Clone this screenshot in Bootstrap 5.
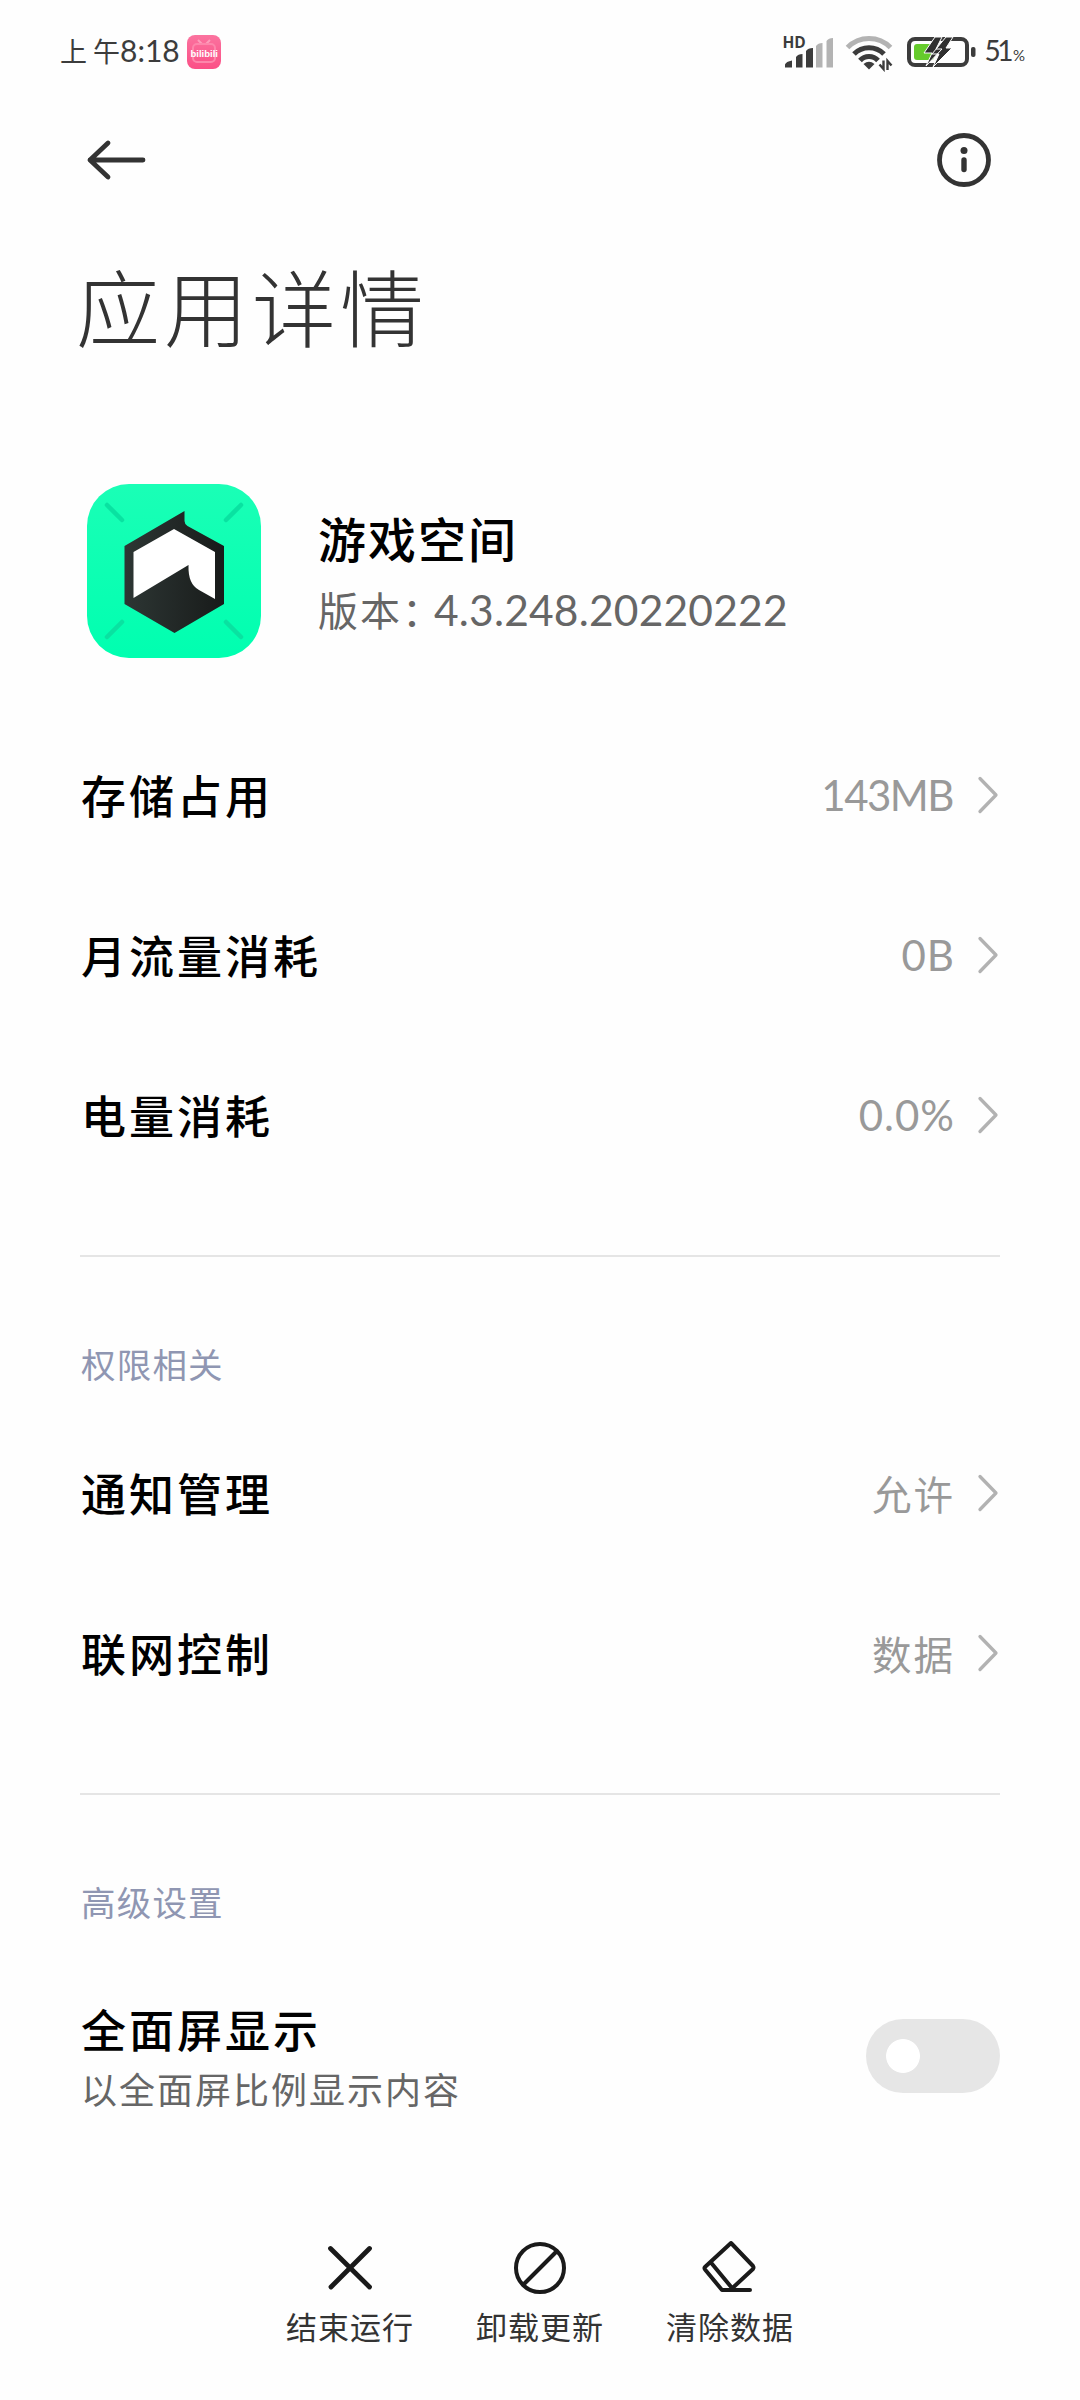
<!DOCTYPE html>
<html lang="zh-CN">
<head>
<meta charset="utf-8">
<meta name="viewport" content="width=device-width, initial-scale=1">
<title>应用详情</title>
<link href="https://cdn.jsdelivr.net/npm/bootstrap@5.3.0/dist/css/bootstrap.min.css" rel="stylesheet">
<style>
body{background:#fefefe;font-family:"Noto Sans CJK SC",sans-serif;color:#000;overflow:hidden}
.screen{width:1080px;height:2400px}
svg{display:block;flex:none}
.latin{font-family:Lato,"Noto Sans CJK SC",sans-serif}
.statusbar{height:104px;padding:0 55px 0 60px;color:#3c3c3c}
.clock{font-size:27px;line-height:36px;margin:-4px 7px 0 0;white-space:pre}
.clock-num{font-family:Lato,sans-serif;font-size:30px;letter-spacing:0}
.pct-num{font-family:Lato,sans-serif;font-size:28px;line-height:40px;letter-spacing:-3.500px}
.pct-sign{font-size:15px;letter-spacing:0;margin-left:3px}
.toolbar{height:112px;padding:0 88px 0 86px}
.page-title{height:186px;padding-left:76px;font-size:84px;line-height:178px;font-weight:300;letter-spacing:4px;color:#333;margin:0}
.app-head{height:313px;padding:82px 0 0 87px;gap:57px}
.app-text{padding-top:18px}
.app-name{font-size:48px;line-height:70px;font-weight:500;letter-spacing:2px}
.app-ver{font-size:40px;line-height:74px;letter-spacing:2px;color:#666;white-space:nowrap}
.app-ver .latin{font-size:42.500px;letter-spacing:.2px;margin-left:-10px}
.entry.list-group-item{height:160px;border:0;padding:0 81px;background:transparent;color:#000}
.entry-label{font-size:45px;line-height:60px;font-weight:500;letter-spacing:3px}
.entry-value{font-size:39.500px;line-height:60px;letter-spacing:2px;color:#999;margin-right:22px}
.entry-value.latin{font-size:42px;letter-spacing:1px}
.entry-value.tight{letter-spacing:-1.500px;margin-right:24px}
.rule{height:2px;margin:60px 80px 0;background:#e5e5e5}
.section-name{height:156px;padding-left:81px;font-size:34.500px;font-weight:400;line-height:213px;letter-spacing:1.200px;color:#8f96b2;margin:0}
.switch-row{height:210px;padding:0 80px 0 81px}
.switch-text{padding-top:5px}
.switch-row .entry-label{line-height:58px}
.switch-note{font-size:36px;line-height:60px;letter-spacing:2px;color:#666}
.form-check-input.toggle{width:134px;height:74px;margin:0;border:0;float:none;background:radial-gradient(circle at 37px 37px,#fff 16.500px,#e6e6e6 17.300px);border-radius:37px}
.actions{height:239px;padding-top:77px}
.action{width:190px;color:#333;font-size:31px;line-height:44px;letter-spacing:1px}
.action svg{margin-bottom:6px}
</style>
</head>
<body>
<svg width="0" height="0" class="position-absolute"><symbol id="chev" viewBox="0 0 22 40"><path d="M3 3.500 19 20 3 36.500" fill="none" stroke="#b2b2b2" stroke-width="3.300" stroke-linecap="round" stroke-linejoin="round"/></symbol></svg>
<div class="screen d-flex flex-column">
  <header class="statusbar d-flex justify-content-between align-items-center">
    <div class="d-flex align-items-center">
      <span class="clock">上 午<span class="clock-num">8:18</span></span>
      <svg width="34" height="34" viewBox="0 0 34 34"><defs><linearGradient id="pk" x2="0" y2="1"><stop stop-color="#fb739f"/><stop offset="1" stop-color="#fb4f86"/></linearGradient></defs><rect width="34" height="34" rx="8" fill="url(#pk)"/><path d="M11 5l4 4M23 5l-4 4" stroke="#fd9dbb" stroke-width="2"/><rect x="6" y="9" width="22" height="18" rx="4" fill="none" stroke="#fd86ab" stroke-width="2"/><text x="3.500" y="22" font-family="Liberation Sans" font-weight="700" font-size="9.500" fill="#fff">bilibili</text></svg>
    </div>
    <div class="d-flex align-items-center gap-2">
      <svg width="194" height="40" viewBox="785 32 194 40">
        <text x="785.500" y="48" font-family="Open Sans" font-weight="700" font-size="15.500" fill="#3c3c3c">HD</text>
        <path fill="#3c3c3c" d="M788 67.500v-3q1-3 7-4v7zM799 67.500V57q2-3 6.500-3v13.500zM809 67.500V51q2-3 7-3v19.500z"/>
        <path fill="#b3b3b3" d="M819 67.500V46q2-3 6.500-3v24.500zM829.500 67.500V41q2-3 6.500-3v29.500z"/>
        <g fill="none" stroke="#3c3c3c" stroke-width="5">
          <path stroke="#b3b3b3" d="M850.500 47.500a30 30 0 0 1 43 0"/>
          <path d="M857 54a21 21 0 0 1 30 0"/>
          <path d="M863 60.500a12 12 0 0 1 18 0"/>
        </g>
        <path d="M866.500 64q5.500-4.500 11 0l-5.500 5.500z" fill="#3c3c3c"/>
        <path d="M886.500 60.500v8.500l-4-4.500M890.500 70v-9l4 4.500" fill="none" stroke="#3c3c3c" stroke-width="2.400"/>
        <rect x="912" y="39" width="58" height="26" rx="6" fill="none" stroke="#3c3c3c" stroke-width="4"/>
        <rect x="917" y="44" width="20" height="16" rx="3" fill="#65cb2b"/>
        <rect x="974" y="47" width="4.500" height="10" rx="2" fill="#3c3c3c"/>
        <path d="M938 37h7l-6 12h6l-16 17 6-13h-8zM949 37h7l-7 11h6l-19 19 6-13h-7z" fill="#303030" stroke="#fefefe" stroke-width="1"/>
      </svg>
      <span class="pct-num">51<span class="pct-sign">%</span></span>
    </div>
  </header>
  <nav class="toolbar d-flex justify-content-between align-items-center">
    <svg width="62" height="44" viewBox="0 0 62 44" fill="none" stroke="#333" stroke-width="4.800" stroke-linecap="round" stroke-linejoin="round"><path d="M22 5 4 22l18 17M4 22h53"/></svg>
    <svg width="56" height="56" viewBox="0 0 56 56"><circle cx="28" cy="28" r="24.500" fill="none" stroke="#333" stroke-width="4.800"/><circle cx="28" cy="18.500" r="3.500" fill="#333"/><path d="M28 28v9.500" stroke="#333" stroke-width="5.400" stroke-linecap="round"/></svg>
  </nav>
  <h1 class="page-title">应用详情</h1>
  <section class="app-head d-flex align-items-start">
    <svg width="174" height="174" viewBox="0 0 174 174">
      <defs><linearGradient id="mint" x2="0" y2="1"><stop stop-color="#1affb6"/><stop offset="1" stop-color="#00ffb0"/></linearGradient><linearGradient id="ink"><stop stop-color="#2d3634"/><stop offset="1" stop-color="#181b1a"/></linearGradient></defs>
      <rect width="174" height="174" rx="42" fill="url(#mint)"/>
      <path d="M20 21l15 15M154 21l-15 15M20 153l15-15M154 153l-15-15" stroke="#09e2a1" stroke-width="4.500" stroke-linecap="round"/>
      <path d="M37.500 62 97.500 27v10q0 3 3 5l36.500 20v58l-49.500 29-50-29z" fill="url(#ink)"/>
      <path d="M46.500 68 87 45l41 23v47l-16-9q-11-6-10.500-24v-1l-55 33z" fill="#fff"/>
    </svg>
    <div class="app-text">
      <div class="app-name">游戏空间</div>
      <div class="app-ver">版本：<span class="latin">4.3.248.20220222</span></div>
    </div>
  </section>
  <div class="list-group list-group-flush">
    <a class="list-group-item entry d-flex align-items-center"><span class="entry-label me-auto">存储占用</span><span class="entry-value latin tight">143MB</span><svg width="22" height="40"><use href="#chev"/></svg></a>
    <a class="list-group-item entry d-flex align-items-center"><span class="entry-label me-auto">月流量消耗</span><span class="entry-value latin">0B</span><svg width="22" height="40"><use href="#chev"/></svg></a>
    <a class="list-group-item entry d-flex align-items-center"><span class="entry-label me-auto">电量消耗</span><span class="entry-value latin">0.0%</span><svg width="22" height="40"><use href="#chev"/></svg></a>
  </div>
  <div class="rule"></div>
  <h2 class="section-name">权限相关</h2>
  <div class="list-group list-group-flush">
    <a class="list-group-item entry d-flex align-items-center"><span class="entry-label me-auto">通知管理</span><span class="entry-value">允许</span><svg width="22" height="40"><use href="#chev"/></svg></a>
    <a class="list-group-item entry d-flex align-items-center"><span class="entry-label me-auto">联网控制</span><span class="entry-value">数据</span><svg width="22" height="40"><use href="#chev"/></svg></a>
  </div>
  <div class="rule"></div>
  <h2 class="section-name">高级设置</h2>
  <div class="switch-row d-flex align-items-center justify-content-between">
    <div class="switch-text"><div class="entry-label">全面屏显示</div><div class="switch-note">以全面屏比例显示内容</div></div>
    <input class="form-check-input toggle" type="checkbox" role="switch" aria-label="全面屏显示">
  </div>
  <footer class="actions d-flex justify-content-center">
    <div class="action d-flex flex-column align-items-center"><svg width="60" height="60" viewBox="0 0 60 60" fill="none" stroke="#1a1a1a" stroke-width="4.800" stroke-linecap="round"><path d="M10.500 10.500l39 38.500M49.500 10.500 11 49"/></svg>结束运行</div>
    <div class="action d-flex flex-column align-items-center"><svg width="60" height="60" viewBox="0 0 60 60" fill="none" stroke="#1a1a1a" stroke-width="4"><circle cx="30" cy="30" r="24"/><path d="M13 47 47 13"/></svg>卸载更新</div>
    <div class="action d-flex flex-column align-items-center"><svg width="60" height="60" viewBox="0 0 60 60" fill="none" stroke="#1a1a1a" stroke-width="4" stroke-linecap="round" stroke-linejoin="round"><path d="M31 5 53 28q1 1.500 0 3L32 50.500M31 5 5 29q-1 1 0 2.500L22 52h28M10.500 24 32 50"/></svg>清除数据</div>
  </footer>
</div>
<script src="https://cdn.jsdelivr.net/npm/bootstrap@5.3.0/dist/js/bootstrap.bundle.min.js"></script>
</body>
</html>
